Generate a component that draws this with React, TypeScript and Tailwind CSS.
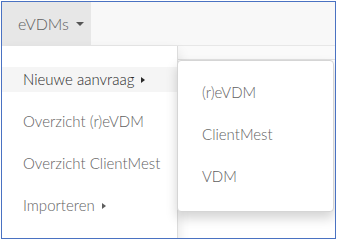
const font = { fontFamily: "Lato, 'Open Sans', sans-serif" };

const RightCaret = () => (
  <span className="ml-[7px] inline-block h-0 w-0 border-y-[3px] border-l-4 border-y-transparent border-l-current" />
);

const App = () => {
  return (
    <div className="h-[240px] w-[337px] bg-white p-px" style={font}>
      <div className="relative h-[238px] w-[335px] overflow-hidden border border-[#4a72c2] bg-white font-light">
        {/* navbar */}
        <div className="flex h-[44px] border-b border-[#e7e7e7] bg-[#f8f8f8]">
          <div className="flex w-[89px] items-center bg-[#e7e7e7] pl-[16px] text-[16px] text-[#5f5f5f]">
            eVDMs
            <span className="ml-[7px] inline-block h-0 w-0 border-x-4 border-t-4 border-x-transparent border-t-[#555]" />
          </div>
        </div>

        {/* strip behind */}
        <div className="h-[14px] border-b border-[#e2e2e2] bg-[#fafafa]" />

        {/* dropdown */}
        <div className="absolute left-0 top-[44px] h-[200px] w-[176px] border-r border-[#dcdcdc] bg-white pt-[21px] text-[15px] shadow-[0_6px_12px_rgba(0,0,0,0.12)]">
          <ul className="flex flex-col gap-[17px]">
            <li className="flex h-[25px] items-center bg-[#f5f5f5] pl-[21px] text-[#2a2a2a]">
              Nieuwe aanvraag
              <RightCaret />
            </li>
            <li className="flex h-[25px] items-center pl-[21px] text-[#5f5f5f]">Overzicht (r)eVDM</li>
            <li className="flex h-[25px] items-center pl-[21px] text-[#5f5f5f]">Overzicht ClientMest</li>
            <li className="flex h-[25px] items-center pl-[21px] text-[#5f5f5f]">
              Importeren
              <RightCaret />
            </li>
          </ul>
        </div>

        {/* submenu */}
        <div className="absolute left-[175px] top-[58px] h-[152px] w-[157px] rounded-[4px] border border-[#d5d5d5] bg-white pt-[19px] text-[15px] text-[#5f5f5f] shadow-[0_6px_12px_rgba(0,0,0,0.175)]">
          <ul className="flex flex-col gap-[17px]">
            <li className="flex h-[25px] items-center pl-[24px]">(r)eVDM</li>
            <li className="flex h-[25px] items-center pl-[24px]">ClientMest</li>
            <li className="flex h-[25px] items-center pl-[24px]">VDM</li>
          </ul>
        </div>
      </div>
    </div>
  );
};

export default App;
